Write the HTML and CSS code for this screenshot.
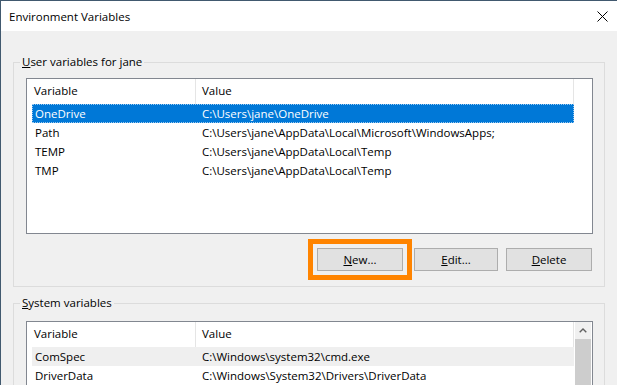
FILE: index.html
```html
<!DOCTYPE html>
<html lang="en">
<head>
    <meta charset="UTF-8">
    <meta name="viewport" content="width=device-width, initial-scale=1.0">
    <title>Environment Variables</title>
    <link rel="stylesheet" href="styles.css">
</head>
<body>
    <div class="janela">
        <div class="titulo">
            <span class="titulo-texto">Environment Variables</span>
            <svg class="fechar" width="11" height="11" viewBox="0 0 11 11">
                <path d="M0.5 0.5 L10.5 10.5 M10.5 0.5 L0.5 10.5" stroke="#000" stroke-width="1" fill="none"/>
            </svg>
        </div>

        <div class="conteudo">
            <fieldset class="grupo">
                <legend><u>U</u>ser variables for jane</legend>
                <div class="lista">
                    <div class="lista-corpo">
                        <div class="cabecalho">
                            <div class="col-var">Variable</div>
                            <div class="col-val">Value</div>
                        </div>
                        <div class="linha selecionada">
                            <div class="col-var">OneDrive</div>
                            <div class="col-val">C:\Users\jane\OneDrive</div>
                        </div>
                        <div class="linha">
                            <div class="col-var">Path</div>
                            <div class="col-val">C:\Users\jane\AppData\Local\Microsoft\WindowsApps;</div>
                        </div>
                        <div class="linha">
                            <div class="col-var">TEMP</div>
                            <div class="col-val">C:\Users\jane\AppData\Local\Temp</div>
                        </div>
                        <div class="linha">
                            <div class="col-var">TMP</div>
                            <div class="col-val">C:\Users\jane\AppData\Local\Temp</div>
                        </div>
                    </div>
                </div>
                <div class="botoes">
                    <button class="botao destaque"><u>N</u>ew...</button>
                    <button class="botao botao-editar"><u>E</u>dit...</button>
                    <button class="botao botao-apagar"><u>D</u>elete</button>
                </div>
            </fieldset>

            <fieldset class="grupo grupo-sistema">
                <legend><u>S</u>ystem variables</legend>
                <div class="lista lista-sistema">
                    <div class="lista-corpo">
                        <div class="cabecalho">
                            <div class="col-var">Variable</div>
                            <div class="col-val">Value</div>
                        </div>
                        <div class="linha hover">
                            <div class="col-var">ComSpec</div>
                            <div class="col-val">C:\Windows\system32\cmd.exe</div>
                        </div>
                        <div class="linha">
                            <div class="col-var">DriverData</div>
                            <div class="col-val">C:\Windows\System32\Drivers\DriverData</div>
                        </div>
                    </div>
                    <div class="rolagem">
                        <div class="seta">
                            <svg width="8" height="5" viewBox="0 0 8 5">
                                <path d="M0.7 4.3 L4 1 L7.3 4.3" stroke="#606060" stroke-width="1.4" fill="none"/>
                            </svg>
                        </div>
                        <div class="polegar"></div>
                    </div>
                </div>
            </fieldset>
        </div>
    </div>
</body>
</html>
```

FILE: styles.css
```css
*{
    margin: 0;
    padding: 0;
    box-sizing: border-box;
}
body{
    font-family: "Open Sans", "Noto Sans", sans-serif;
    font-size: 11.5px;
    color: #000;
    background-color: #f0f0f0;
}
.janela{
    width: 617px;
    height: 385px;
    overflow: hidden;
    border-left: 1px solid #41596f;
    border-top: 1px solid #41596f;
    background-color: #f0f0f0;
}
.titulo{
    height: 30px;
    background-color: #fff;
    display: flex;
    align-items: center;
    justify-content: space-between;
    padding-left: 8px;
    padding-right: 9px;
}
.titulo-texto{
    font-size: 11.5px;
}
.fechar{
    display: block;
}
.conteudo{
    padding-left: 12px;
}
.grupo{
    width: 592px;
    margin-top: 23px;
    border: 1px solid #dcdcdc;
    padding: 0;
}
.grupo legend{
    margin-left: 6px;
    padding: 0 2px;
    line-height: 16px;
    height: 16px;
}
.grupo-sistema{
    margin-top: 8px;
}
.lista{
    width: 567px;
    height: 156px;
    margin-top: 8px;
    margin-left: 12px;
    border: 1px solid #828790;
    background-color: #fff;
    display: flex;
}
.lista-sistema{
    margin-top: 10px;
    height: 200px;
}
.lista-corpo{
    flex: 1;
    padding-left: 5px;
}
.cabecalho{
    display: flex;
    height: 25px;
    line-height: 24px;
}
.cabecalho .col-var{
    width: 164px;
    padding-left: 2px;
    border-right: 1px solid #e5e5e5;
}
.cabecalho .col-val{
    width: 378px;
    padding-left: 6px;
    border-right: 1px solid #e5e5e5;
}
.linha{
    display: flex;
    width: 542px;
    height: 19px;
    line-height: 19px;
    white-space: nowrap;
}
.linha .col-var{
    width: 165px;
    padding-left: 3px;
}
.linha .col-val{
    padding-left: 5px;
}
.selecionada{
    background-color: #0078d7;
    color: #fff;
    outline: 1px dotted #9cc9ef;
    outline-offset: -1px;
}
.hover{
    background-color: #efefef;
}
.rolagem{
    width: 16px;
    margin-right: 1px;
    background-color: #f0f0f0;
}
.seta{
    height: 17px;
    display: flex;
    align-items: center;
    justify-content: center;
}
.seta svg{
    display: block;
}
.polegar{
    height: 200px;
    background-color: #cdcdcd;
}
.botoes{
    display: flex;
    justify-content: flex-end;
    margin-top: 14px;
    padding-right: 12px;
    padding-bottom: 15px;
}
.botao{
    width: 86px;
    height: 23px;
    background-color: #e1e1e1;
    border: 1px solid #adadad;
    font-family: inherit;
    font-size: 11.5px;
    color: #000;
}
.botao-editar{
    width: 84px;
    margin-left: 11px;
}
.botao-apagar{
    margin-left: 8px;
}
.destaque{
    outline: 5px solid #ff8400;
    outline-offset: 4px;
}
```
